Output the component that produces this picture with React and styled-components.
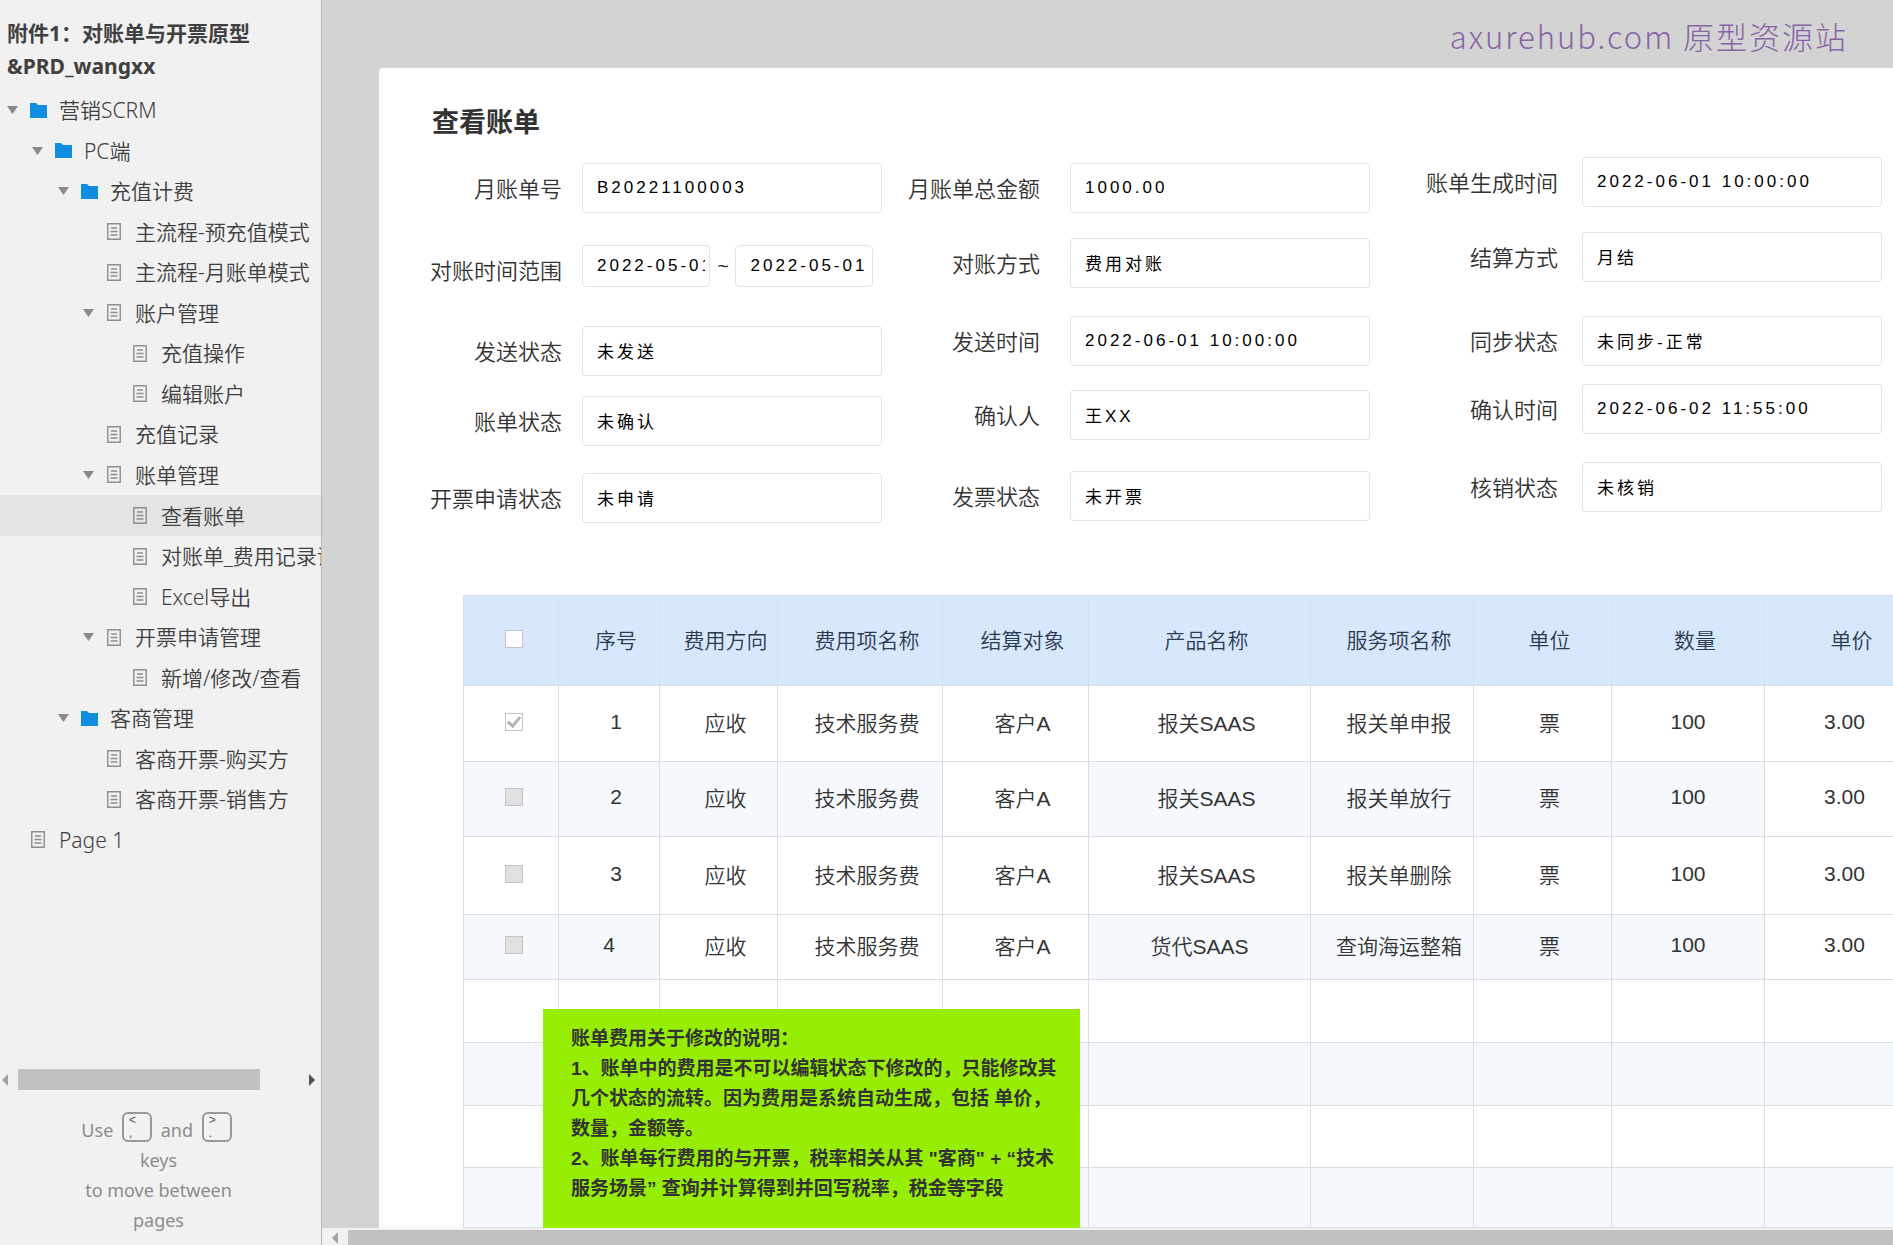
import React from "react";
import styled, { createGlobalStyle, css } from "styled-components";

const TREE = [
  { label: "营销SCRM", depth: 0, folder: true, open: true },
  { label: "PC端", depth: 1, folder: true, open: true },
  { label: "充值计费", depth: 2, folder: true, open: true },
  { label: "主流程-预充值模式", depth: 3 },
  { label: "主流程-月账单模式", depth: 3 },
  { label: "账户管理", depth: 3, open: true },
  { label: "充值操作", depth: 4 },
  { label: "编辑账户", depth: 4 },
  { label: "充值记录", depth: 3 },
  { label: "账单管理", depth: 3, open: true },
  { label: "查看账单", depth: 4, selected: true },
  { label: "对账单_费用记录调整", depth: 4 },
  { label: "Excel导出", depth: 4 },
  { label: "开票申请管理", depth: 3, open: true },
  { label: "新增/修改/查看", depth: 4 },
  { label: "客商管理", depth: 2, folder: true, open: true },
  { label: "客商开票-购买方", depth: 3 },
  { label: "客商开票-销售方", depth: 3 },
  { label: "Page 1", depth: 0 },
];

const INDENTS = [7, 32, 58, 83, 109];

const FIELD_COLUMNS = [
  {
    rows: "82px 81px 70px 77px 50px",
    lead: 0,
    gap: 20,
    top: 6,
    fields: [
      { id: "billNo", label: "月账单号", value: "B20221100003" },
      { id: "range", label: "对账时间范围", range: ["2022-05-01", "2022-05-01"] },
      { id: "sendState", label: "发送状态", value: "未发送" },
      { id: "billState", label: "账单状态", value: "未确认" },
      { id: "applyState", label: "开票申请状态", value: "未申请" },
    ],
  },
  {
    rows: "75px 78px 74px 81px 50px",
    lead: 25,
    gap: 30,
    top: 6,
    fields: [
      { id: "total", label: "月账单总金额", value: "1000.00" },
      { id: "method", label: "对账方式", value: "费用对账" },
      { id: "sendTime", label: "发送时间", value: "2022-06-01 10:00:00" },
      { id: "confirmer", label: "确认人", value: "王XX" },
      { id: "invoiceState", label: "发票状态", value: "未开票" },
    ],
  },
  {
    rows: "75px 84px 68px 78px 50px",
    lead: 55,
    gap: 24,
    top: 0,
    fields: [
      { id: "createTime", label: "账单生成时间", value: "2022-06-01 10:00:00" },
      { id: "settle", label: "结算方式", value: "月结" },
      { id: "syncState", label: "同步状态", value: "未同步-正常" },
      { id: "confirmTime", label: "确认时间", value: "2022-06-02 11:55:00" },
      { id: "verifyState", label: "核销状态", value: "未核销" },
    ],
  },
];

const COLUMNS = [
  { title: "序号", width: 101 },
  { title: "费用方向", width: 118 },
  { title: "费用项名称", width: 165 },
  { title: "结算对象", width: 146 },
  { title: "产品名称", width: 222 },
  { title: "服务项名称", width: 163 },
  { title: "单位", width: 138 },
  { title: "数量", width: 153, numeric: true },
  { title: "单价", width: 160, numeric: true },
];

const ROWS = [
  { height: 76, plain: [], cells: ["1", "应收", "技术服务费", "客户A", "报关SAAS", "报关单申报", "票", "100", "3.00"] },
  { height: 75, striped: true, plain: [3, 8], cells: ["2", "应收", "技术服务费", "客户A", "报关SAAS", "报关单放行", "票", "100", "3.00"] },
  { height: 78, plain: [], cells: ["3", "应收", "技术服务费", "客户A", "报关SAAS", "报关单删除", "票", "100", "3.00"] },
  { height: 65, striped: true, plain: [1, 2, 3, 8], flush: [0, 4], cells: ["4", "应收", "技术服务费", "客户A", "货代SAAS", "查询海运整箱", "票", "100", "3.00"] },
  { height: 63, plain: [] },
  { height: 63, striped: true, plain: [] },
  { height: 62, plain: [] },
  { height: 60, striped: true, plain: [] },
];

function FolderIcon() {
  return (
    <svg width="17" height="15" viewBox="0 0 17 15" aria-hidden="true">
      <path d="M0 0h6l2 2h9v13H0z" fill="#0f8de0" />
    </svg>
  );
}

function PageIcon() {
  return (
    <svg width="16" height="17" viewBox="0 0 16 17" aria-hidden="true">
      <path
        d="M1.75.75h12.5v15.5H1.75zM5 5h6M4.5 8.5h7M4.5 12h7"
        fill="none"
        stroke="#8e8e8e"
        strokeWidth="1.4"
      />
    </svg>
  );
}

function Tree() {
  return (
    <TreeList>
      {TREE.map((node) => (
        <TreeItem key={node.label} $indent={INDENTS[node.depth]} $selected={node.selected}>
          <Toggle>
            {node.open && (
              <svg width="11" height="8" viewBox="0 0 11 8" aria-hidden="true">
                <path d="M0 0h11L5.5 8z" fill="#8a8a8a" />
              </svg>
            )}
          </Toggle>
          <NodeIcon>{node.folder ? <FolderIcon /> : <PageIcon />}</NodeIcon>
          <NodeLink href="#">{node.label}</NodeLink>
        </TreeItem>
      ))}
    </TreeList>
  );
}

function Arrow({ direction, color }) {
  return (
    <svg width="6" height="12" viewBox="0 0 6 12" aria-hidden="true">
      <path d={direction === "left" ? "M6 0v12L0 6z" : "M0 0v12l6-6z"} fill={color} />
    </svg>
  );
}

function Field({ field }) {
  return (
    <>
      <FieldLabel htmlFor={field.id}>{field.label}</FieldLabel>
      {field.range ? (
        <RangeBox>
          <FieldInput id={field.id} $short defaultValue={field.range[0]} />
          <span>~</span>
          <FieldInput $short aria-label="结束时间" defaultValue={field.range[1]} />
        </RangeBox>
      ) : (
        <FieldInput id={field.id} defaultValue={field.value} />
      )}
    </>
  );
}

function BillTable() {
  return (
    <Table>
      <colgroup>
        <Col $width={95} />
        {COLUMNS.map((column) => (
          <Col key={column.title} $width={column.width} />
        ))}
      </colgroup>
      <thead>
        <Row $height={90}>
          <HeadCell $check>
            <Check type="checkbox" aria-label="全选" />
          </HeadCell>
          {COLUMNS.map((column) => (
            <HeadCell key={column.title}>{column.title}</HeadCell>
          ))}
        </Row>
      </thead>
      <tbody>
        {ROWS.map((row, index) => (
          <Row key={index} $height={row.height}>
            <Cell $check $striped={row.striped}>
              {row.cells && (
                <Check type="checkbox" disabled defaultChecked={index === 0} aria-label={"选择第" + row.cells[0] + "行"} />
              )}
            </Cell>
            {COLUMNS.map((column, i) => (
              <Cell
                key={column.title}
                $striped={row.striped && !row.plain.includes(i)}
                $flush={column.numeric || (row.flush && row.flush.includes(i))}
              >
                {row.cells && row.cells[i]}
              </Cell>
            ))}
          </Row>
        ))}
      </tbody>
    </Table>
  );
}

export default function App() {
  return (
    <Page>
      <GlobalStyle />
      <Sidebar>
        <ProjectName>
          附件1：对账单与开票原型
          <br />
          &amp;PRD_wangxx
        </ProjectName>
        <Tree />
        <SideScroll>
          <ScrollButton aria-label="向左滚动">
            <Arrow direction="left" color="#a3a3a3" />
          </ScrollButton>
          <SideTrack>
            <SideThumb />
          </SideTrack>
          <ScrollButton $end aria-label="向右滚动">
            <Arrow direction="right" color="#505050" />
          </ScrollButton>
        </SideScroll>
        <Hint>
          Use <Key><span>&lt;</span><span>,</span></Key> and <Key><span>&gt;</span><span>.</span></Key>
          <br />
          keys
          <br />
          to move between
          <br />
          pages
        </Hint>
      </Sidebar>
      <Frame>
        <Canvas>
          <Banner>axurehub.com 原型资源站</Banner>
          <Panel>
            <Title>查看账单</Title>
            <Form>
              {FIELD_COLUMNS.map((column, index) => (
                <FieldColumn
                  key={index}
                  $rows={column.rows}
                  $lead={column.lead}
                  $gap={column.gap}
                  $top={column.top}
                >
                  {column.fields.map((field) => (
                    <Field key={field.id} field={field} />
                  ))}
                </FieldColumn>
              ))}
            </Form>
            <TableArea>
              <BillTable />
              <Note>
                账单费用关于修改的说明：
                <br />
                1、账单中的费用是不可以编辑状态下修改的，只能修改其
                <br />
                几个状态的流转。因为费用是系统自动生成，包括 单价，
                <br />
                数量，金额等。
                <br />
                2、账单每行费用的与开票，税率相关从其 "客商" + “技术
                <br />
                服务场景” 查询并计算得到并回写税率，税金等字段
              </Note>
            </TableArea>
          </Panel>
        </Canvas>
        <FrameScroll>
          <ScrollButton aria-label="向左滚动">
            <Arrow direction="left" color="#a3a3a3" />
          </ScrollButton>
          <FrameThumb />
        </FrameScroll>
      </Frame>
    </Page>
  );
}

const GlobalStyle = createGlobalStyle`
  * {
    box-sizing: border-box;
  }
  body {
    margin: 0;
    color: #333;
    font-family: "Liberation Sans", "Noto Sans CJK SC", sans-serif;
  }
`;

const Page = styled.div`
  display: flex;
  height: 100vh;
  overflow: hidden;
`;

const Sidebar = styled.aside`
  flex: none;
  display: flex;
  flex-direction: column;
  width: 322px;
  overflow: hidden;
  background: #f1f1f1;
  border-right: 1px solid #b8b8b8;
  font-family: "Noto Sans", "Noto Sans CJK SC", sans-serif;
`;

const ProjectName = styled.h1`
  margin: 0;
  padding: 17px 7px 7px;
  font-size: 21px;
  line-height: 33px;
  color: #404040;
`;

const TreeList = styled.ul`
  display: grid;
  grid-auto-rows: 1fr;
  height: 770px;
  margin: 0;
  padding: 0;
  list-style: none;
`;

const TreeItem = styled.li`
  display: flex;
  align-items: center;
  padding-left: ${(props) => props.$indent}px;
  background: ${(props) => (props.$selected ? "#e4e4e4" : "transparent")};
`;

const Toggle = styled.span`
  display: flex;
  flex: none;
  width: 23px;
`;

const NodeIcon = styled.span`
  display: flex;
  flex: none;
  width: 29px;
`;

const NodeLink = styled.a`
  font-size: 21px;
  font-weight: 350;
  line-height: 30px;
  white-space: nowrap;
  color: #404040;
  text-decoration: none;
`;

const SideScroll = styled.div`
  display: flex;
  align-items: center;
  height: 21px;
  margin-top: auto;
`;

const SideTrack = styled.div`
  flex: 1;
`;

const SideThumb = styled.div`
  width: 85%;
  height: 21px;
  background: #c1c1c1;
`;

const ScrollButton = styled.button`
  display: flex;
  align-items: center;
  justify-content: center;
  width: 18px;
  padding: ${(props) => (props.$end ? "0 6px" : "0 10px 0 2px")};
  border: 0;
  background: transparent;
`;

const Hint = styled.p`
  margin: 22px 0 10px;
  padding-right: 4px;
  font-size: 18px;
  line-height: 30px;
  text-align: center;
  color: #8c8c8c;
`;

const Key = styled.kbd`
  display: inline-block;
  width: 30px;
  height: 30px;
  margin: 0 4px;
  padding-left: 5px;
  border: 2px solid #999;
  border-radius: 6px;
  font-family: "Liberation Sans", sans-serif;
  font-size: 12px;
  line-height: 13px;
  text-align: left;
  color: #555;
  span {
    display: block;
  }
`;

const Frame = styled.main`
  flex: 1;
  display: flex;
  flex-direction: column;
  min-width: 0;
  background: #f1f1f1;
`;

const Canvas = styled.div`
  flex: 1;
  display: flex;
  flex-direction: column;
  min-height: 0;
  padding-left: 57px;
  overflow: hidden;
  background: #d3d3d3;
`;

const Banner = styled.header`
  flex: none;
  height: 68px;
  padding-right: 45px;
  font-family: "Noto Sans CJK SC", sans-serif;
  font-size: 31px;
  font-weight: 300;
  letter-spacing: 2px;
  line-height: 71px;
  text-align: right;
  color: #8764a5;
`;

const Panel = styled.section`
  flex: 1;
  min-height: 0;
  overflow: hidden;
  background: #fff;
  border-top-left-radius: 4px;
`;

const Title = styled.h2`
  margin: 0;
  padding: 35px 53px 14px;
  font-size: 27px;
  line-height: 40px;
  color: #333;
`;

const Form = styled.form`
  display: grid;
  grid-template-columns: minmax(0, 453fr) minmax(0, 488fr) minmax(0, 512fr);
  padding: 0 11px 0 50px;
`;

const FieldColumn = styled.div`
  display: grid;
  grid-template-columns: 133px minmax(0, 1fr);
  grid-template-rows: ${(props) => props.$rows};
  align-content: start;
  align-items: start;
  column-gap: ${(props) => props.$gap}px;
  padding-left: ${(props) => props.$lead}px;
  padding-top: ${(props) => props.$top}px;
`;

const FieldLabel = styled.label`
  padding-top: 2px;
  font-size: 22px;
  font-weight: 350;
  line-height: 50px;
  text-align: right;
  white-space: nowrap;
`;

const FieldInput = styled.input`
  width: 100%;
  height: 50px;
  padding: 0 14px 1px;
  border: 1px solid #e3e3e3;
  border-radius: 4px;
  background: #fff;
  font-family: "Liberation Sans", "Noto Sans CJK SC", sans-serif;
  font-size: 17px;
  letter-spacing: 3px;
  color: #000;
  ${(props) =>
    props.$short &&
    css`
      height: 42px;
      padding-right: 4px;
    `}
`;

const RangeBox = styled.div`
  display: grid;
  grid-template-columns: 128fr 25px 137fr;
  align-items: center;
  padding-right: 9px;
  font-size: 20px;
  text-align: center;
`;

const TableArea = styled.div`
  position: relative;
  margin: 72px 0 0 84px;
`;

const Table = styled.table`
  width: 1461px;
  table-layout: fixed;
  border-collapse: collapse;
  font-size: 21px;
`;

const Col = styled.col`
  width: ${(props) => props.$width}px;
`;

const Row = styled.tr`
  height: ${(props) => props.$height}px;
`;

const cellBase = css`
  padding: 0 0 4px ${(props) => (props.$check ? 6 : props.$flush ? 0 : 14)}px;
  border: 1px solid #dcdde0;
  font-weight: 350;
  text-align: center;
  white-space: nowrap;
`;

const HeadCell = styled.th`
  ${cellBase}
  background: #d7e8fd;
  color: #2c3a52;
`;

const Cell = styled.td`
  ${cellBase}
  background: ${(props) => (props.$striped ? "#f5f8fc" : "#fff")};
`;

const Check = styled.input`
  appearance: none;
  display: block;
  width: 18px;
  height: 18px;
  margin: 0 auto;
  border: 1px solid #c4c4c4;
  background: #fff;
  &:disabled {
    background: #e0e0e0;
  }
  &:checked {
    display: grid;
    place-items: center;
    background: #fff;
  }
  &:checked:after {
    content: "";
    width: 5px;
    height: 10px;
    margin-bottom: 3px;
    border: solid #b5b5b5;
    border-width: 0 3px 3px 0;
    transform: rotate(40deg);
  }
`;

const Note = styled.div`
  position: absolute;
  top: 414px;
  left: 80px;
  width: 537px;
  height: 219px;
  padding: 15px 0 0 28px;
  background: #97ee04;
  font-size: 19px;
  font-weight: 700;
  line-height: 30px;
  white-space: nowrap;
`;

const FrameScroll = styled.div`
  flex: none;
  display: flex;
  height: 17px;
  padding: 2px 0 0 8px;
`;

const FrameThumb = styled.div`
  flex: 1;
  background: #c1c1c1;
`;
